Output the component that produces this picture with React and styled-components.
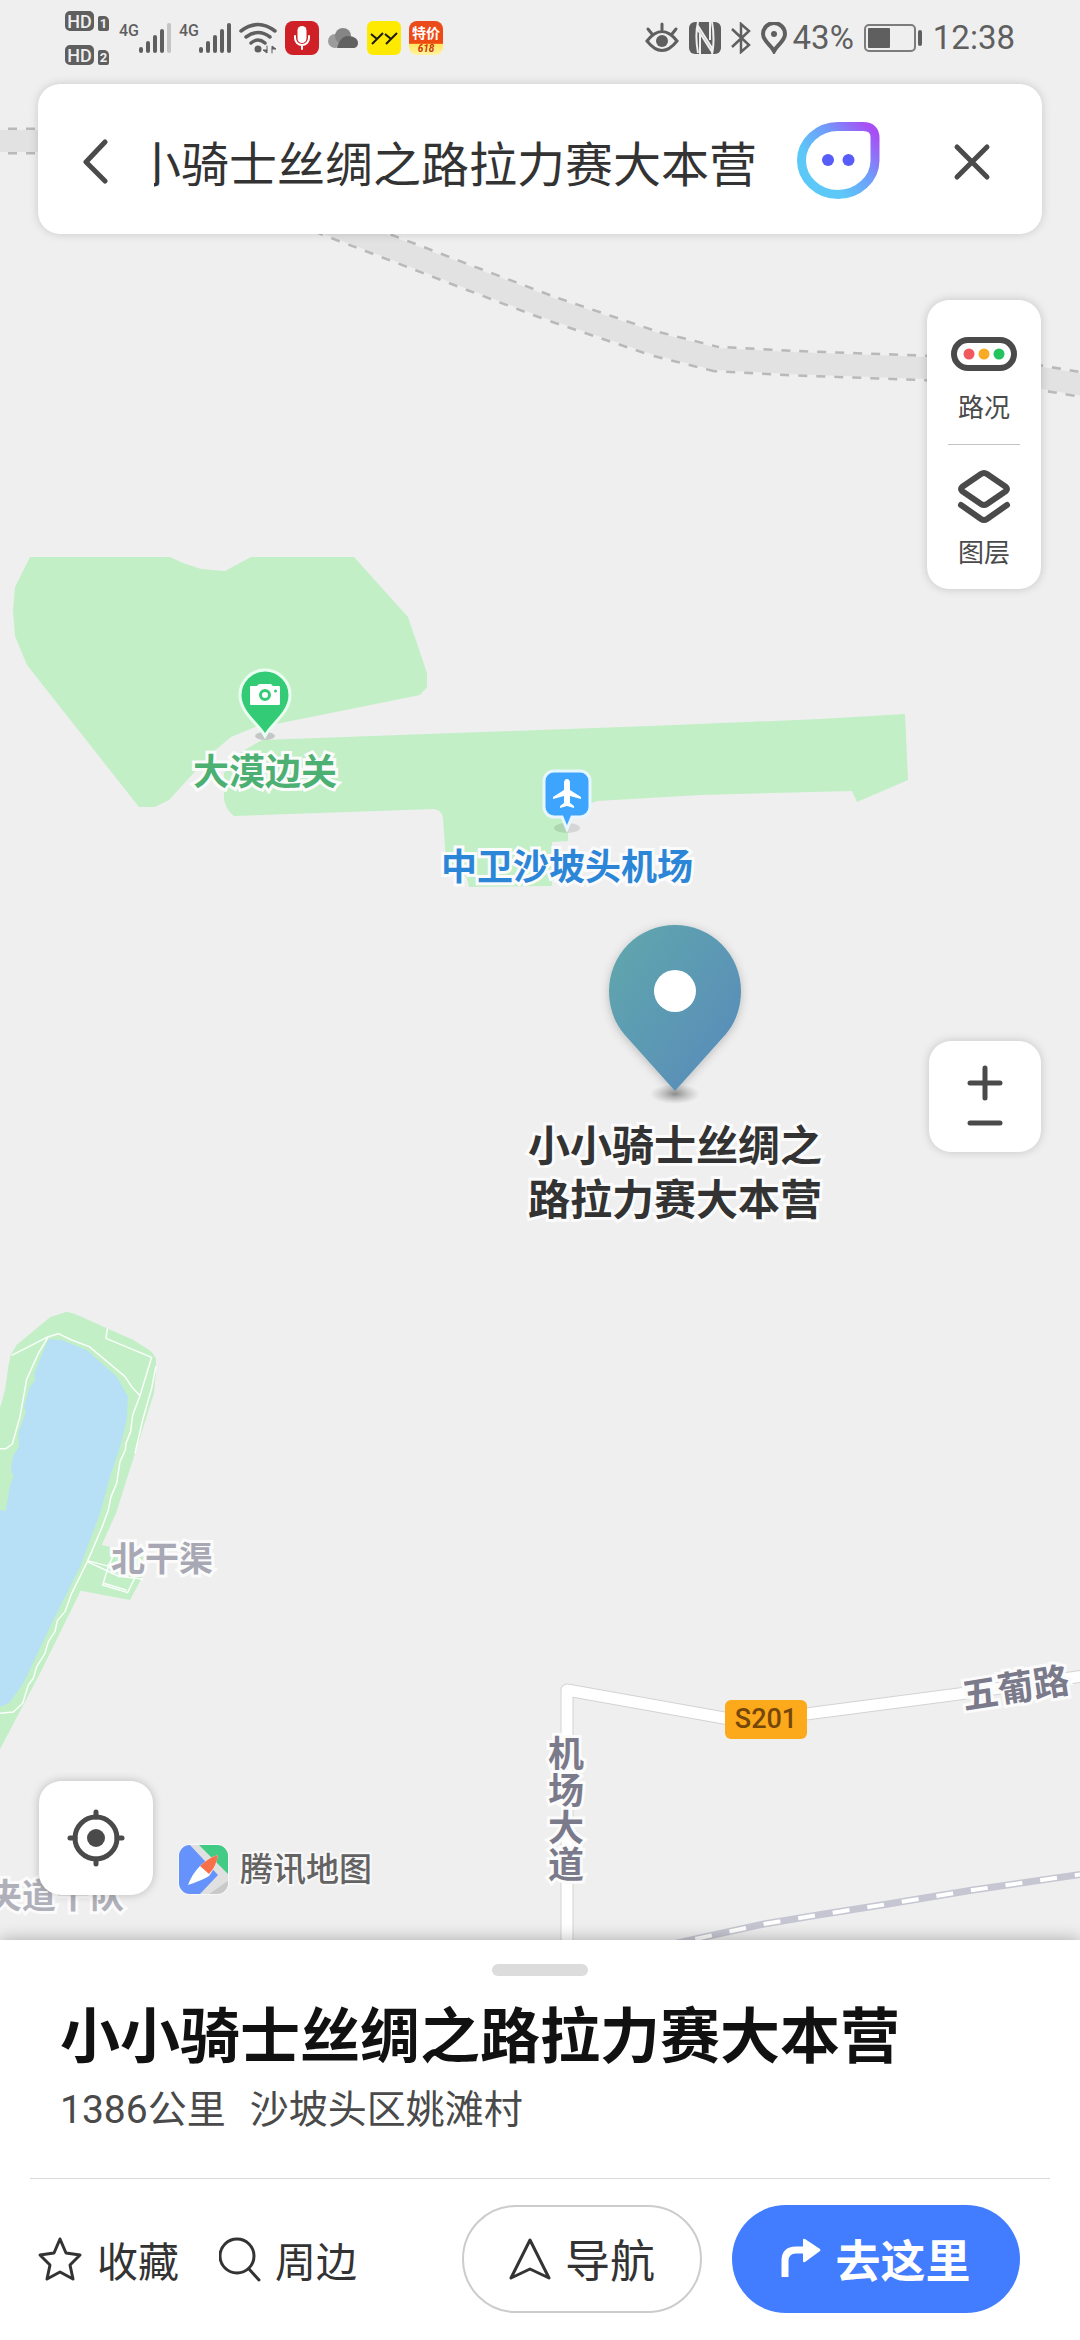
import React, { useEffect, useRef } from 'react';
import styled, { createGlobalStyle } from 'styled-components';

const GlobalStyle = createGlobalStyle`
  * {
    box-sizing: border-box;
  }
  body {
    margin: 0;
    background: #efefef;
    font-family: "Noto Sans CJK SC", sans-serif;
    color: #333;
  }
  button, input {
    font: inherit;
    color: inherit;
    border: none;
    background: none;
    padding: 0;
    margin: 0;
    outline: none;
  }
  svg {
    display: block;
    flex: none;
  }
`;

const Page = styled.div`
  display: flex;
  flex-direction: column;
  min-height: 100vh;
`;

const MapArea = styled.main`
  position: relative;
  flex: 1;
  display: flex;
  overflow: hidden;
`;

const Canvas = styled.div`
  position: absolute;
  inset: 0;
  overflow: hidden;
`;

const Overlay = styled.div`
  position: relative;
  flex: 1;
  display: flex;
  flex-direction: column;
`;

/* ---------- status bar ---------- */

const StatusBar = styled.header`
  display: flex;
  align-items: center;
  justify-content: space-between;
  height: 84px;
  padding: 0 65px 8px;
  color: #5f5f5f;
  font-family: Roboto, sans-serif;
  font-size: 33px;
  line-height: 40px;
`;

const StatusGroup = styled.div`
  display: flex;
  align-items: center;
  gap: ${props => props.gap}px;
`;

const SimColumn = styled.div`
  display: flex;
  flex-direction: column;
  gap: 14px;
  margin-right: 2px;
`;

const SimRow = styled.div`
  display: flex;
  align-items: flex-end;
  gap: 4px;
`;

const HdTag = styled.span`
  width: 29px;
  height: 20px;
  border: 2px solid #5f5f5f;
  border-radius: 5px;
  background: #5f5f5f;
  color: #efefef;
  font-size: 18px;
  font-weight: 500;
  line-height: 17px;
  text-align: center;
`;

const SimTag = styled.span`
  width: 11px;
  height: 15px;
  border-radius: 2px 5px 2px 2px;
  background: #5f5f5f;
  color: #efefef;
  font-size: 13px;
  font-weight: 700;
  line-height: 15px;
  text-align: center;
`;

const Signal = styled.div`
  display: flex;
  align-items: flex-start;
  font-size: 16px;
  font-weight: 500;
  line-height: 16px;
`;

const SaleBadge = styled.div`
  display: flex;
  flex-direction: column;
  align-items: center;
  width: 34px;
  height: 34px;
  border-radius: 8px;
  overflow: hidden;
  background: linear-gradient(#ea4a1c 0, #f04a12 66%, #ffe45c 67%, #fff3a0 100%);
  color: #fff;
  font-family: "Noto Sans CJK SC", sans-serif;
  font-size: 14px;
  font-weight: 700;
  line-height: 23px;
`;

const SaleDate = styled.span`
  color: #c8360c;
  font-family: Roboto, sans-serif;
  font-size: 10px;
  font-style: italic;
  line-height: 10px;
`;

/* ---------- search ---------- */

const SearchBar = styled.form`
  display: flex;
  align-items: center;
  height: 150px;
  margin: 0 38px;
  padding: 3px 50px 0 44px;
  border-radius: 22px;
  background: #fff;
  box-shadow: 0 0 10px rgba(0, 0, 0, 0.16);
`;

const SearchInput = styled.input`
  flex: 1;
  min-width: 0;
  height: 72px;
  margin: 0 40px 0 45px;
  font-size: 48px;
  line-height: 72px;
`;

const IconButton = styled.button`
  display: flex;
  align-items: center;
  justify-content: center;
`;

const CloseButton = styled(IconButton)`
  margin-left: 72px;
`;

/* ---------- map controls ---------- */

const Panel = styled.div`
  display: flex;
  flex-direction: column;
  align-items: center;
  align-self: flex-end;
  margin-right: 39px;
  border-radius: 22px;
  background: #fff;
  box-shadow: 0 0 10px rgba(0, 0, 0, 0.18);
  color: #4a4a4a;
`;

const LayerPanel = styled(Panel)`
  width: 114px;
  margin-top: 66px;
`;

const ZoomPanel = styled(Panel)`
  width: 112px;
  margin-top: 452px;
  padding: 17px 0 14px;
`;

const ZoomButton = styled(IconButton)`
  width: 100%;
  height: ${props => props.$tall ? 50 : 30}px;
`;

const LayerButton = styled.button`
  display: flex;
  flex-direction: column;
  align-items: center;
  justify-content: flex-end;
  gap: ${props => props.gap}px;
  width: 100%;
  height: 144px;
  padding-bottom: 20px;
  font-size: 26px;
  line-height: 36px;
`;

const PanelLine = styled.div`
  width: 72px;
  height: 1px;
  background: #c4c4c4;
`;

const BottomRow = styled.div`
  display: flex;
  align-items: flex-end;
  gap: 25px;
  margin: auto 0 45px 39px;
`;

const LocateButton = styled(IconButton)`
  width: 114px;
  height: 114px;
  border-radius: 22px;
  background: #fff;
  box-shadow: 0 0 10px rgba(0, 0, 0, 0.22);
`;

const Brand = styled.div`
  display: flex;
  align-items: flex-start;
  gap: 11px;
  color: #636363;
  font-size: 33px;
  font-weight: 500;
  line-height: 46px;
  -webkit-text-stroke: 4px #f8f8f8;
  paint-order: stroke fill;
`;

/* ---------- things pinned on the map ---------- */

const Marker = styled.div`
  position: absolute;
  left: ${props => props.x}px;
  top: ${props => props.y}px;
  transform: translateX(-50%);
  display: flex;
  flex-direction: column;
  align-items: center;
  gap: 9px;
`;

const Label = styled.span`
  color: ${props => props.color};
  font-size: ${props => props.size}px;
  font-weight: 700;
  line-height: ${props => props.line}px;
  text-align: center;
  white-space: pre;
  -webkit-text-stroke: 6px #fbfbfb;
  paint-order: stroke fill;
`;

const RoadLabel = styled(Label)`
  transform: rotate(-9deg);
`;

const RoadBadge = styled.span`
  width: 82px;
  border-radius: 6px;
  background: #fda91c;
  color: #754708;
  font-family: Roboto, sans-serif;
  font-size: 27px;
  font-weight: 500;
  line-height: 39px;
  text-align: center;
`;

/* ---------- place sheet ---------- */

const Sheet = styled.section`
  position: relative;
  display: flex;
  flex-direction: column;
  padding: 24px 30px 27px;
  background: #fff;
  box-shadow: 0 0 16px rgba(0, 0, 0, 0.3);
`;

const Handle = styled.div`
  align-self: center;
  width: 96px;
  height: 12px;
  border-radius: 6px;
  background: #dcdcdc;
`;

const Title = styled.h1`
  margin: 16px 30px 0;
  color: #111;
  font-size: 60px;
  font-weight: 700;
  line-height: 80px;
`;

const SubTitle = styled.p`
  display: flex;
  gap: 24px;
  margin: 8px 30px 0;
  color: #4a4a4a;
  font-family: Roboto, "Noto Sans CJK SC", sans-serif;
  font-size: 39px;
  line-height: 60px;
`;

const Divider = styled.div`
  height: 1px;
  margin-top: 38px;
  background: #dadada;
`;

const Actions = styled.div`
  display: flex;
  align-items: center;
  margin: 26px 30px 0 7px;
`;

const PlainAction = styled.button`
  display: flex;
  align-items: center;
  gap: 14px;
  margin-right: 40px;
  font-size: 41px;
  line-height: 60px;
`;

const PillAction = styled.button`
  display: flex;
  align-items: center;
  justify-content: center;
  gap: 14px;
  width: ${props => props.$primary ? 288 : 240}px;
  height: 108px;
  margin-left: ${props => props.$primary ? '30px' : 'auto'};
  border: ${props => props.$primary ? 'none' : '2px solid #ccc'};
  border-radius: 54px;
  background: ${props => props.$primary ? '#427cff' : '#fff'};
  color: ${props => props.$primary ? '#fff' : '#333'};
  font-size: 45px;
  font-weight: ${props => props.$primary ? 700 : 400};
  line-height: 60px;
`;

const railTop = 'M-10 141H60C180 150 270 204 358 235L470 278L552 309L656 344L716 359L790 363L927 368L1000 371L1042 378L1090 386';
const railBottom = 'M664 1946L700 1938L764 1924L818 1915L888 1904L973 1890L1090 1873';
const road = 'M567 1950V1690L724 1718Q764 1724 806 1714L959 1694L1090 1675';

function MapShapes() {
  return (
    <svg width="100%" height="100%" viewBox="0 0 1080 1940" preserveAspectRatio="xMinYMin slice" fill="none">
      <path d={railTop} stroke="#b9b9b9" strokeWidth="27" strokeDasharray="9 9" />
      <path d={railTop} stroke="#e2e2e2" strokeWidth="22" />
      <path
        fill="#c2efc6"
        d="M30 557H170L183 563L201 569L225 571L251 557H354L408 617L427 673V687L420 695L281 723L255 727L231 737L212 753L169 800L155 807H139L27 665L15 636L13 610L15 587Z"
      />
      <path
        fill="#c2efc6"
        d="M224 797V773L241 752L262 740L540 730L650 726L820 719L905 714L908 780L857 802L852 791L700 795L597 801L568 812V841L552 842V886L469 887L467 878L446 860L443 819Q442 809 433 809L234 816Q224 808 224 797Z"
      />
      <g transform="translate(0 1290) scale(0.3333)">
        <path
          fill="#c2efc6"
          d="M0 355L15 300L25 230L32 195L50 165L150 82L200 65L225 72L400 150L455 185L468 205V245L462 310L435 395L405 490L348 670L305 765L335 772L430 800L425 865L390 930L242 902L125 1140L0 1378Z"
        />
        <path
          fill="#b7dff6"
          d="M145 148L185 150L260 180L350 260L384 320L380 390L360 470L330 560L300 670L240 830L150 1010L70 1180L28 1238L0 1250V660L18 662L28 595L40 560L33 540L38 500L57 470L55 430L78 365L72 350L88 295L105 270L103 250Z"
        />
        <g stroke="#fafffa" strokeWidth="4.5" strokeLinejoin="round">
          <path d="M0 476H18L37 462L60 380L80 268L115 190L145 140L175 131L215 150L268 170L375 260L395 290L420 317M145 140L35 196" />
          <path d="M322 115L318 145L455 202L420 317L398 375L392 425L378 460L376 480L360 515L350 580L333 620L325 660L305 715L262 815L215 910L195 965L172 992L165 1025L145 1055L135 1090L110 1130L100 1165L85 1185L68 1240L40 1266L0 1270" />
          <path d="M468 228L455 295L428 390L405 490M262 815L355 858L430 868M262 812L330 830M340 795L325 830L308 885L383 908L405 862M312 880L380 901" />
        </g>
      </g>
      <path d={road} stroke="#d3d3d3" strokeWidth="13" strokeLinejoin="round" />
      <path d={road} stroke="#fff" strokeWidth="11" strokeLinejoin="round" />
      <path d={railBottom} stroke="#c5c6d1" strokeWidth="7" />
      <path d={railBottom} stroke="#fff" strokeWidth="4" strokeDasharray="17 18" strokeDashoffset="3" />
    </svg>
  );
}

function ScenicPin() {
  return (
    <svg width="56" height="73" viewBox="0 0 56 73">
      <ellipse cx="28" cy="69" rx="10" ry="4" fill="#c3c8c6" />
      <path d="M28 69C22 57 3 46 3 28A25 25 0 0 1 53 28C53 46 34 57 28 69Z" fill="#34cb76" stroke="#eafff0" strokeWidth="3" />
      <path d="M14 19h6l2-2h12l2 2h6a1 1 0 0 1 1 1v17a1 1 0 0 1-1 1H14a1 1 0 0 1-1-1V20a1 1 0 0 1 1-1Z" fill="#fff" />
      <circle cx="28" cy="28" r="4.5" fill="none" stroke="#34cb76" strokeWidth="3" />
      <circle cx="38.5" cy="24" r="1.5" fill="#34cb76" />
    </svg>
  );
}

function AirportPin() {
  return (
    <svg width="52" height="67" viewBox="0 0 52 67">
      <ellipse cx="26" cy="60" rx="13" ry="5" fill="#000" opacity="0.1" />
      <path d="M13 3h26a10 10 0 0 1 10 10v26a10 10 0 0 1-10 10h-8l-5 12l-5-12h-8a10 10 0 0 1-10-10V13a10 10 0 0 1 10-10Z" fill="#3ea5ff" stroke="#e8f7ff" strokeWidth="3" />
      <path d="M26 11c2 0 3 2 3 4v7l11 7v2l-11-3v7l4 3v2l-7-2l-7 2v-2l4-3v-7l-11 3v-2l11-7v-7c0-2 1-4 3-4Z" fill="#fff" />
    </svg>
  );
}

function PlacePin() {
  return (
    <svg width="152" height="192" viewBox="0 0 152 192">
      <defs>
        <linearGradient id="pinFill" x1="0" y1="0.2" x2="0.8" y2="0.9">
          <stop offset="0" stopColor="#5fa5ad" />
          <stop offset="1" stopColor="#598eb9" />
        </linearGradient>
        <radialGradient id="pinShade">
          <stop offset="0" stopColor="#555" stopOpacity="0.6" />
          <stop offset="1" stopColor="#777" stopOpacity="0" />
        </radialGradient>
        <filter id="pinBlur" x="-20%" y="-20%" width="140%" height="140%">
          <feDropShadow dx="0" dy="2" stdDeviation="5" floodColor="#000" floodOpacity="0.22" />
        </filter>
      </defs>
      <ellipse cx="76" cy="179" rx="25" ry="10" fill="url(#pinShade)" />
      <path d="M76 176L25 119C15 107 10 92 10 76A66 66 0 0 1 142 76C142 92 137 107 127 119Z" fill="url(#pinFill)" filter="url(#pinBlur)" />
      <circle cx="76" cy="76" r="21" fill="#fff" />
    </svg>
  );
}

const bars = [[0, 6], [7, 12], [14, 18], [21, 24], [28, 30]];

function SignalBars({ level }) {
  return (
    <Signal>
      4G
      <svg width="32" height="30" viewBox="0 0 32 30" fill="currentColor">
        {bars.map(([x, h], i) => (
          <rect key={x} x={x} y={30 - h} width="4" height={h} rx="2" opacity={i < level ? 1 : 0.3} />
        ))}
      </svg>
    </Signal>
  );
}

function StatusIcons() {
  return (
    <StatusBar>
      <StatusGroup gap={8}>
        <SimColumn>
          <SimRow><HdTag>HD</HdTag><SimTag>1</SimTag></SimRow>
          <SimRow><HdTag>HD</HdTag><SimTag>2</SimTag></SimRow>
        </SimColumn>
        <SignalBars level={4} />
        <SignalBars level={5} />
        <svg width="38" height="32" viewBox="0 0 38 32" fill="none" stroke="currentColor" strokeWidth="4" strokeLinecap="round">
          <path d="M2 9Q19-4 36 9M7 15Q19 6 31 15M12 21Q19 15 26 21" strokeWidth="3.5" />
          <circle cx="19" cy="27" r="3.5" fill="currentColor" stroke="none" />
          <path d="M28 24v7l-4-3h4M33 31v-7l4 3h-4" strokeWidth="1" fill="currentColor" />
        </svg>
        <svg width="34" height="34" viewBox="0 0 34 34">
          <rect width="34" height="34" rx="8" fill="#cf2027" />
          <rect x="12.5" y="5" width="9" height="17" rx="4.5" fill="#fff" />
          <path d="M10 15v2a7 7 0 0 0 14 0v-2M17 24v4" fill="none" stroke="#fff" strokeWidth="2" strokeLinecap="round" />
        </svg>
        <svg width="32" height="22" viewBox="0 0 32 22">
          <circle cx="8" cy="14" r="7" fill="#9c9c9c" />
          <circle cx="16" cy="9" r="8" fill="#858585" />
          <path d="M10 21c2-8 6-12 11-12c6 0 10 3 10 7c0 3-2 5-5 5Z" fill="#616161" />
        </svg>
        <svg width="34" height="34" viewBox="0 0 34 34" fill="none" stroke="#1b1b10" strokeWidth="2">
          <rect width="34" height="34" rx="6" fill="#fdea00" stroke="none" />
          <path d="M4 13l6 5M16 12L5 23M18 13l6 5M30 12L19 23" />
        </svg>
        <SaleBadge>特价<SaleDate>618</SaleDate></SaleBadge>
      </StatusGroup>
      <StatusGroup gap={10}>
        <svg width="34" height="32" viewBox="0 0 34 32" fill="none" stroke="currentColor" strokeWidth="3" strokeLinecap="round">
          <path d="M2 19Q17 0 32 19Q17 38 2 19ZM17 2v6M3 7l4 5M31 7l-4 5" />
          <circle cx="17" cy="19" r="6" fill="currentColor" stroke="none" />
        </svg>
        <svg width="32" height="32" viewBox="0 0 32 32">
          <rect width="32" height="32" rx="6" fill="currentColor" />
          <path d="M9 0c-2 8-2 20 0 31M23 32c2-8 2-22 0-32M9 8V4l14 22v4ZM11 12v20M21 0v18" fill="none" stroke="#efefef" strokeWidth="2" />
        </svg>
        <svg width="20" height="32" viewBox="0 0 20 32" fill="none" stroke="currentColor" strokeWidth="2.5">
          <path d="M1 7l17 16l-8 7V2l8 7L1 25" />
        </svg>
        <StatusGroup gap={6}>
          <svg width="26" height="32" viewBox="0 0 26 32" fill="none" stroke="currentColor" strokeWidth="4">
            <path d="M13 29C10 23 2 19 2 12A11 11 0 0 1 24 12C24 19 16 23 13 29Z" />
            <circle cx="13" cy="12" r="3" fill="currentColor" stroke="none" />
          </svg>
          43%
        </StatusGroup>
        <svg width="59" height="28" viewBox="0 0 59 28" fill="none">
          <rect x="1" y="1" width="50" height="26" rx="4" stroke="currentColor" strokeWidth="2" opacity="0.8" />
          <rect x="4" y="4" width="22" height="20" rx="1" fill="currentColor" />
          <rect x="54" y="6" width="4" height="16" rx="2" fill="currentColor" />
        </svg>
        12:38
      </StatusGroup>
    </StatusBar>
  );
}

function SearchBox({ value }) {
  const input = useRef(null);

  // a long name shows its end
  useEffect(() => {
    input.current.scrollLeft = input.current.scrollWidth;
  }, [value]);

  return (
    <SearchBar>
      <IconButton type="button" aria-label="返回">
        <svg width="27" height="46" viewBox="0 0 27 46" fill="none" stroke="#4a4a4a" strokeWidth="5" strokeLinecap="round" strokeLinejoin="round">
          <path d="M23 4L4 24L23 43" />
        </svg>
      </IconButton>
      <SearchInput ref={input} aria-label="搜索地点" defaultValue={value} />
      <IconButton type="button" aria-label="语音助手">
        <svg width="83" height="77" viewBox="0 0 83 77" fill="none">
          <defs>
            <linearGradient id="bot" x1="0.25" y1="0.65" x2="0.95" y2="0.05">
              <stop offset="0" stopColor="#5cc8f8" />
              <stop offset="0.5" stopColor="#6f9cfa" />
              <stop offset="1" stopColor="#a74ff5" />
            </linearGradient>
          </defs>
          <path d="M41 4.5H66Q78 4.5 78 16V38.5C78 57 61 72.5 41 72.5S4.5 57 4.5 38.5S21 4.5 41 4.5Z" stroke="url(#bot)" strokeWidth="9" />
          <circle cx="31" cy="38" r="6" fill="#585cf8" />
          <circle cx="51.5" cy="38" r="6" fill="#585cf8" />
        </svg>
      </IconButton>
      <CloseButton type="button" aria-label="关闭">
        <svg width="40" height="40" viewBox="0 0 40 40" stroke="#4a4a4a" strokeWidth="5" strokeLinecap="round">
          <path d="M5 6L35 36M35 6L5 36" />
        </svg>
      </CloseButton>
    </SearchBar>
  );
}

function App() {
  return (
    <Page>
      <GlobalStyle />
      <MapArea>
        <Canvas>
          <MapShapes />
          <Marker x={265} y={667}>
            <ScenicPin />
            <Label color="#4cb072" size={36} line={40}>大漠边关</Label>
          </Marker>
          <Marker x={567} y={768}>
            <AirportPin />
            <Label color="#2c86d8" size={36} line={40}>中卫沙坡头机场</Label>
          </Marker>
          <Marker x={675} y={915}>
            <PlacePin />
            <Label color="#333" size={42} line={54}>{'小小骑士丝绸之\n路拉力赛大本营'}</Label>
          </Marker>
          <Marker x={162} y={1537}>
            <Label color="#a7a8b4" size={34} line={40}>北干渠</Label>
          </Marker>
          <Marker x={56} y={1874}>
            <Label color="#b0b0ba" size={34} line={40}>夹道十队</Label>
          </Marker>
          <Marker x={566} y={1733}>
            <Label color="#7a7a8b" size={36} line={37}>{'机\n场\n大\n道'}</Label>
          </Marker>
          <Marker x={1015} y={1665}>
            <RoadLabel color="#7a7a8b" size={36} line={40}>五葡路</RoadLabel>
          </Marker>
          <Marker x={766} y={1700}>
            <RoadBadge>S201</RoadBadge>
          </Marker>
        </Canvas>
        <Overlay>
          <StatusIcons />
          <SearchBox value="小小骑士丝绸之路拉力赛大本营" />
          <LayerPanel>
            <LayerButton gap={16}>
              <svg width="66" height="36" viewBox="0 0 66 36">
                <rect x="3" y="4" width="60" height="28" rx="14" fill="none" stroke="currentColor" strokeWidth="6" />
                <circle cx="18" cy="18" r="5.5" fill="#f0595d" />
                <circle cx="33" cy="18" r="5.5" fill="#fbaa26" />
                <circle cx="48" cy="18" r="5.5" fill="#25c35e" />
              </svg>
              路况
            </LayerButton>
            <PanelLine />
            <LayerButton gap={8}>
              <svg width="54" height="56" viewBox="0 0 54 56" fill="none" stroke="currentColor" strokeWidth="6" strokeLinecap="round" strokeLinejoin="round">
                <path d="M24 5Q27 3 30 5L49 18Q51 20 49 22L30 35Q27 37 24 35L5 22Q3 20 5 18Z" />
                <path d="M4 36L24 50Q27 52 30 50L50 36" />
              </svg>
              图层
            </LayerButton>
          </LayerPanel>
          <ZoomPanel>
            <ZoomButton $tall aria-label="放大">
              <svg width="36" height="36" viewBox="0 0 36 36" stroke="currentColor" strokeWidth="5" strokeLinecap="round">
                <path d="M18 3V33M3 18H33" />
              </svg>
            </ZoomButton>
            <ZoomButton aria-label="缩小">
              <svg width="36" height="6" viewBox="0 0 36 6" stroke="currentColor" strokeWidth="5" strokeLinecap="round">
                <path d="M3 3H33" />
              </svg>
            </ZoomButton>
          </ZoomPanel>
          <BottomRow>
            <LocateButton aria-label="定位">
              <svg width="60" height="60" viewBox="0 0 60 60" fill="none" stroke="#4a4a4a" strokeWidth="5" strokeLinecap="round">
                <circle cx="30" cy="30" r="21" />
                <path d="M30 4v5M30 51v5M4 30h5M51 30h5" />
                <circle cx="30" cy="30" r="9" fill="#4a4a4a" stroke="none" />
              </svg>
            </LocateButton>
            <Brand>
              <svg width="51" height="51" viewBox="0 0 51 51">
                <defs>
                  <clipPath id="logoClip"><rect x="1" y="1" width="49" height="49" rx="11" /></clipPath>
                </defs>
                <rect width="51" height="51" rx="12" fill="#f8f8f8" />
                <g clipPath="url(#logoClip)">
                  <rect width="51" height="51" fill="#e0e0e0" />
                  <path d="M0 0H11L40 31L21 51H0Z" fill="#6593fb" />
                  <path d="M20 0H51V31Z" fill="#41cb84" />
                  <path d="M51 36V51H30Z" fill="#c9c9c9" />
                  <path d="M40 11Q38 23 31 32Q25 36 10 41Q14 30 22 22Q30 14 40 11Z" fill="#fff" />
                  <path d="M40 11Q38 23 31 30L22 22Q30 14 40 11Z" fill="#f8704a" />
                </g>
              </svg>
              腾讯地图
            </Brand>
          </BottomRow>
        </Overlay>
      </MapArea>
      <Sheet>
        <Handle />
        <Title>小小骑士丝绸之路拉力赛大本营</Title>
        <SubTitle>
          <span>1386公里</span>
          <span>沙坡头区姚滩村</span>
        </SubTitle>
        <Divider />
        <Actions>
          <PlainAction>
            <svg width="46" height="46" viewBox="0 0 46 46" fill="none" stroke="currentColor" strokeWidth="3" strokeLinejoin="round">
              <path d="M23 3L29 17L43 19L33 29L36 43L23 36L10 43L13 29L3 19L17 17Z" />
            </svg>
            收藏
          </PlainAction>
          <PlainAction>
            <svg width="42" height="46" viewBox="0 0 42 46" fill="none" stroke="currentColor" strokeWidth="3" strokeLinecap="round">
              <circle cx="18" cy="20" r="17" />
              <path d="M30 33L40 44" />
            </svg>
            周边
          </PlainAction>
          <PillAction>
            <svg width="42" height="44" viewBox="0 0 42 44" fill="none" stroke="currentColor" strokeWidth="3" strokeLinejoin="round">
              <path d="M21 3L40 41L21 32L2 41Z" />
            </svg>
            导航
          </PillAction>
          <PillAction $primary>
            <svg width="40" height="44" viewBox="0 0 40 44" fill="none">
              <path d="M4 40V24Q4 13 15 13H24" stroke="#fff" strokeWidth="7" strokeLinecap="butt" />
              <path d="M22 3Q22 1 24 2L39 12Q40 13 39 14L24 25Q22 26 22 24Z" fill="#fff" />
            </svg>
            去这里
          </PillAction>
        </Actions>
      </Sheet>
    </Page>
  );
}

export default App;
